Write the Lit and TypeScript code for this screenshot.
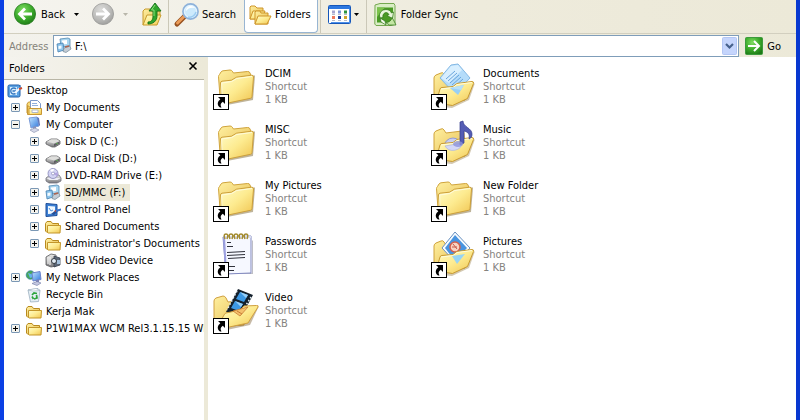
import { LitElement, html, svg, css, nothing } from "lit";
import { customElement, property } from "lit/decorators.js";

/* ---------- shared gradients: every icon carries the defs it needs ---------- */

const defs = svg`
  <defs>
    <linearGradient id="fold" x1="0" y1="0" x2="1" y2="1">
      <stop offset="0" stop-color="#fffcc8"/><stop offset=".5" stop-color="#fdeb90"/><stop offset="1" stop-color="#f0c450"/>
    </linearGradient>
    <linearGradient id="back" x1="0" y1="0" x2="1" y2="1">
      <stop offset="0" stop-color="#fff0a0"/><stop offset="1" stop-color="#e5bb50"/>
    </linearGradient>
    <radialGradient id="green" cx=".4" cy=".3" r=".75">
      <stop offset="0" stop-color="#7fdc62"/><stop offset=".55" stop-color="#3dac2c"/><stop offset="1" stop-color="#1d7a16"/>
    </radialGradient>
    <radialGradient id="gray" cx=".4" cy=".3" r=".75">
      <stop offset="0" stop-color="#dcdcda"/><stop offset=".6" stop-color="#bcbcba"/><stop offset="1" stop-color="#9c9c9a"/>
    </radialGradient>
    <linearGradient id="blue" x1="0" y1="0" x2="1" y2="1">
      <stop offset="0" stop-color="#c4e6ff"/><stop offset="1" stop-color="#2f78dc"/>
    </linearGradient>
    <linearGradient id="metal" x1="0" y1="0" x2="0" y2="1">
      <stop offset="0" stop-color="#eeeeec"/><stop offset="1" stop-color="#77777a"/>
    </linearGradient>
  </defs>`;

/* ---------- toolbar icons ---------- */

const round = (fill: string, rim: string, arrow: unknown) => svg`
  <circle cx="11" cy="11" r="10.6" fill=${fill} stroke=${rim} stroke-width=".8"/>${arrow}`;

const upIcon = svg`
  <path d="M1 23V9l2-2h5l1 2h9v4" fill="url(#back)" stroke="#c89a2c"/>
  <path d="M1 23l4-10h14l-4 10z" fill="url(#fold)" stroke="#c89a2c"/>
  <path d="M6 20c4 0 5-3 5-6V9H7l6-8 6 8h-4v5c0 5-4 8-9 8z" fill="#2fa52c" stroke="#14701a" stroke-width=".9"/>
  <path d="M13 3l-3.500 5h2.500v6" fill="none" stroke="#8ee07c"/>`;

const searchIcon = svg`
  <path d="M2 21l8-8" stroke="#96501e" stroke-width="5" stroke-linecap="round"/>
  <path d="M2.500 20l7-7" stroke="#ec9c58" stroke-width="3" stroke-linecap="round"/>
  <circle cx="15.500" cy="8.500" r="7.600" fill="#cdeafc" stroke="#8fb2da" stroke-width="1.600"/>
  <circle cx="15.500" cy="8.500" r="6" fill="none" stroke="#e8f6ff"/>
  <path d="M11 8c0-3 2-5 5-5 2 0 3 1 4 2-4-1-7 0-9 3z" fill="#fff"/>
  <path d="M13 14c3 1 7-1 8-5" stroke="#9ccdf2" stroke-width="1.500" fill="none"/>`;

const foldersIcon = svg`
  <path d="M1 14V2l1-1h4l2 2h6v11z" fill="url(#back)" stroke="#cf962a"/>
  <path d="M1 14L4 6h12l-3 8z" fill="url(#fold)" stroke="#cf962a"/>
  <path d="M6 19V7l1-1h4l1 2h7v11z" fill="url(#back)" stroke="#cf962a"/>
  <path d="M6 19l3-8h13l-4 8z" fill="url(#fold)" stroke="#cf962a"/>`;

const viewsIcon = svg`
  <rect x=".5" y=".5" width="22" height="18" rx="1" fill="#fff" stroke="#1557ba"/>
  <path d="M1 1h21v3H1z" fill="#2d78e0"/><path d="M21 4h1v14h-19v-1h18z" fill="#4d90ea"/>
  <path d="M4 5.500h3v3H4z" fill="#a7a5cf"/><path d="M10 5.500h3v3h-3z" fill="#7d94d8"/><path d="M16 5.500h3v3h-3z" fill="#2d9440"/>
  <path d="M4 11h3v3H4z" fill="#ee7a5c"/><path d="M10 11h3v3h-3z" fill="#1b3f9c"/><path d="M16 11h3v3h-3z" fill="#cfa42c"/>
  <path d="M4 9.500h3M10 9.500h3M16 9.500h3M4 15.500h3M10 15.500h3M16 15.500h3" stroke="#b4bccb"/>`;

const syncIcon = svg`
  <path d="M1 2l5-1.500h14l1 2v19l-4 1H2L.8 21z" fill="#d9edc4" stroke="#75a850"/>
  <path d="M3 4.500h16v15H3z" fill="#4a9a24"/>
  <path d="M3 4.500h8L3 14z" fill="#7cc24c"/>
  <path d="M6 15a6 6 0 0 1 6-8.500c3 0 4.500 1.500 5.500 3.500l2-1-1 6.500-5.500-3 2-1c-2.500-4-7-1-6 3z" fill="#e8f5da" stroke="#2d7414" stroke-width=".7"/>
  <path d="M18 14.500a6 6 0 0 1-6.500 5l4 2.500h6.500l-2-4z" fill="#c4e6a4" stroke="#2d7414" stroke-width=".7"/>
  <path d="M6 15l1 4 5 3-1-4z" fill="#f2faea" stroke="#2d7414" stroke-width=".7"/>`;

const goIcon = svg`
  <rect x=".5" y=".5" width="17" height="17" rx="1" fill="url(#green)" stroke="#3c9a3c"/>
  <path d="M3 9h10M9 4l5 5-5 5" fill="none" stroke="#fff" stroke-width="2"/>`;

const chevronIcon = svg`
  <rect x=".5" y=".5" width="14" height="17" rx="1" fill="#c5d5fc" stroke="#b3c6f4"/>
  <path d="M4 7l3.500 3.500L11 7" fill="none" stroke="#46618c" stroke-width="2.200"/>`;

/* ---------- small tree icons, 16 × 16 ---------- */

const tree: Record<string, unknown> = {
  desktop: svg`
    <rect x="1" y="2" width="12" height="12" rx="1.500" fill="#5aa2e4" stroke="#225ea8"/>
    <path d="M3 4h7v8H3z" fill="#d8efff"/>
    <path d="M9 6a3 3 0 1 0 0 4M5.500 8H9" fill="none" stroke="#3878c0" stroke-width="1.300"/>
    <path d="M8 10l6-6" stroke="#f4f8ff" stroke-width="2"/><path d="M12 6l3-1" stroke="#d0482c" stroke-width="2"/>
    <path d="M13 2v3" stroke="#225ea8"/>`,
  docs: svg`
    <path d="M1 13V4l1.500-2H5" fill="#f8dc7c" stroke="#c89834"/>
    <path d="M4.500.500h7l3 3v10h-10z" fill="#fff" stroke="#7c98c8"/>
    <path d="M6 3.500h5M6 5.500h6" stroke="#90b0dc"/>
    <path d="M1.500 5.500l3 2v7h-3z" fill="#f4cc5c" stroke="#c89834"/>
    <path d="M3 8.500h12.500v6H3z" fill="url(#fold)" stroke="#c89834"/>
    <path d="M6 10h6v2.500H6z" fill="#fff" stroke="#b0b8c8"/>`,
  computer: svg`
    <path d="M3 1l8-1 2 9-8 2z" fill="url(#blue)" stroke="#7c9cd8"/>
    <path d="M11 0l2 1 1 7-1 1z" fill="#5c74b8"/>
    <path d="M7 10l3-1v3H7z" fill="#8890b8"/>
    <path d="M4 13l5-2 4 2-5 2.500z" fill="#d4d8e8" stroke="#9098b4" stroke-width=".7"/>`,
  disk: svg`
    <path d="M1 8l5-3h6l3 2v3l-5 3H7L1 10z" fill="url(#metal)" stroke="#606062" stroke-width=".8"/>
    <path d="M2 7.500L6 5.500h6l2 1.500-5 2.500z" fill="#dededc"/>
    <path d="M9 10v2.500l5.500-3V7.500z" fill="#606064"/><circle cx="12" cy="9.500" r=".7" fill="#60c84c"/>`,
  dvd: svg`
    <path d="M1 10l4-3h9l2 3v3l-4 2H4l-3-2z" fill="url(#metal)" stroke="#70707c" stroke-width=".8"/>
    <path d="M1.500 10h14l-3 2h-8z" fill="#ececf4"/>
    <circle cx="8" cy="5.500" r="5" fill="#d4d4f4" stroke="#8484b8" stroke-width=".8"/>
    <path d="M8 5.500L5 1.800l4-1z" fill="#fff"/><path d="M8 5.500l4.500-1v4z" fill="#b4a4e0"/>
    <circle cx="8" cy="5.500" r="1.500" fill="#fff" stroke="#8484b8" stroke-width=".7"/>`,
  card: svg`
    <path d="M4 1l8-1 2 1v7l-9 1z" fill="#a9d6f0" stroke="#5088b0" stroke-width=".8"/>
    <path d="M6 2.500l5-.5v4l-5 .5z" fill="#fff"/>
    <path d="M1 6l6-1 1 7-6 2z" fill="#8cc4ec" stroke="#4880b0" stroke-width=".8"/>
    <path d="M2.500 8l3-.500v3l-3 .500z" fill="#f4fbff"/>
    <path d="M8 10l6-2 1 3-5 3.500-3-1z" fill="#c4ccd4" stroke="#708898" stroke-width=".7"/>
    <path d="M9 9l4-1" stroke="#b06450" stroke-width="1.600"/>`,
  panel: svg`
    <path d="M1 1.500l11 1v11l-11 1z" fill="#3c80d4" stroke="#1c4c98"/>
    <path d="M3 4l7 .5v7L3 12z" fill="#f0f8ff"/>
    <path d="M4 6l2 3 2-1" stroke="#4c90dc" fill="none"/>
    <path d="M6 12l5-4 2 1-4 4z" fill="#245098"/>
    <path d="M10 8l6-1.500v2l-5 1.500z" fill="#3c74c8"/><path d="M9 9l2-1v2z" fill="#c84830"/>`,
  folder: svg`
    <path d="M.5 12V4.500l1.500-2h4l1.500 2h6v9H2z" fill="url(#back)" stroke="#b98a1e"/>
    <path d="M2.500 13.500v-7h13l-.5 7.500H3z" fill="url(#fold)" stroke="#c3962a"/>`,
  usb: svg`
    <path d="M1 4l5-3 5 1v11l-5 1-5-2z" fill="url(#metal)" stroke="#58585c" stroke-width=".8"/>
    <path d="M9 3l6 2v7l-6 2z" fill="#5c6878" stroke="#38404c" stroke-width=".8"/>
    <path d="M3 4v7M5 4v8" stroke="#fff"/><circle cx="9" cy="8" r="2.500" fill="#e4ecf4" stroke="#303840"/>
    <path d="M12 7h3v4h-3z" fill="#a4c0dc"/>`,
  network: svg`
    <circle cx="4.500" cy="5" r="4.300" fill="#4aa858" stroke="#2c7ca0" stroke-width=".7"/>
    <path d="M2 3c2 0 3 2 5 1v3L4 8z" fill="#64b4ec"/>
    <path d="M6 3l8-1.500 1 8-8 1.500z" fill="url(#blue)" stroke="#6c84cc"/>
    <path d="M6 13.500l5-2 4 1.500-4 2.500z" fill="#c4c8e0" stroke="#8088b0" stroke-width=".7"/>
    <path d="M10 10l3-.5v2.500h-3z" fill="#7c84b4"/>`,
  bin: svg`
    <path d="M2 3l10-1.500 2 2-1.500 11-8 .5z" fill="#e4eef4" stroke="#9cb0c0" stroke-width=".8"/>
    <path d="M2 3l5 1 7-.5-4-2z" fill="#fff" stroke="#9cb0c0" stroke-width=".6"/>
    <path d="M6 8l2-2 3 .5M10.500 8l.5 3-3 1M7.500 12L6 9.500" fill="none" stroke="#2ca43c" stroke-width="1.700"/>`,
};

/* ---------- large file icons, 44 × 46 ---------- */

const backLeaf = svg`
  <path d="M3 36V13q0-2 2-3l5-2q2-1 3 1l2 3 16-2q2 0 2 2l1 23z" fill="url(#back)" stroke="#cfa23a"/>`;
const frontLeaf = svg`
  <path d="M11 42l10 1 17-8 6-17z" fill="#806020" opacity=".35"/>
  <path d="M5 38l4-14q.5-1.500 2-1.500l11-1 4-3 15-2q2 0 1.500 2l-6 15-15 7z" fill="url(#fold)" stroke="#c89a30"/>
  <path d="M10 24l12-1.500 4-3 15-2" fill="none" stroke="#fffcdc"/>`;

const big: Record<string, unknown> = {
  folder: svg`
    <path d="M14 40l26-5 2-24-1-1z" fill="#705820" opacity=".45"/>
    <path d="M7 32L5.500 11.500q0-1 1-2L8 7q.8-1 2-1.200L17 5q1.500 0 2.300 1.200L20.500 8l14-1.500q2-.2 2.500 1.500l1.500 4-3 21z" fill="url(#back)" stroke="#d0a43c"/>
    <path d="M9 35L7.500 18q0-1.500 1.500-1.800l9.500-1 5-3 15-2q2-.2 2 1.800l-1.500 19.500q0 1.500-1.500 1.800L15 38q-4 .5-6-3z" fill="url(#fold)" stroke="#cda03a"/>
    <path d="M9 34L8.700 18l10-1.500 5-3 15.300-2" fill="none" stroke="#fffcdc"/>`,
  documents: svg`${backLeaf}
    <path d="M20 0l7-1 12 14-15 16L9 13z" fill="#b4dcfa" stroke="#84b8e4"/>
    <path d="M20 1l7-1 4 5-13 13-8-5z" fill="#d8efff"/>
    <path d="M15 14l9-8M17 16l9-8M19 18l9-8M21 20l9-8M23 22l9-8" stroke="#68a4dc"/>
    ${frontLeaf}<path d="M19 23l14-3-6 10z" fill="#98d0f4"/><path d="M19 23l14-3-3 5z" fill="#b8e0f8"/>`,
  music: svg`${backLeaf}
    <circle cx="22" cy="26" r="9" fill="#c8cef4" stroke="#9098d4"/>
    ${frontLeaf}
    <path d="M14 25a9 8 0 0 0 17-3l-6 1-5 1z" fill="#d4d8f8" stroke="#a4acdc" stroke-width=".6"/>
    <path d="M29 1l3-1c0 6 9 7 9 13 0 3-1 4-3 5 1-5-1-7-5-8v12l-4 2z" fill="#545cb4" stroke="#343c8c" stroke-width=".7"/>
    <ellipse cx="27" cy="23" rx="5" ry="3" fill="#8c94dc" opacity=".8"/>`,
  pictures: svg`${backLeaf}
    <path d="M24-1l15 16-14 15L11 15z" fill="#f8fcff" stroke="#6890c0"/>
    <path d="M24 2l12 13-12 13-10-13z" fill="#4894e0"/>
    <circle cx="24" cy="14" r="5" fill="#f8d4c4" stroke="#d4604c" stroke-width="1.500"/>
    <path d="M22 11l4 5M21 14h5" stroke="#c85848"/>
    ${frontLeaf}<path d="M21 23l13-2-8 10z" fill="#98d4f4"/>`,
  notepad: svg`
    <path d="M14 40h25V7l1 1v33H16z" fill="#606070" opacity=".4"/>
    <path d="M10 4l28-1v37l-25 1z" fill="#f6f8ff" stroke="#8088c0"/>
    <path d="M10 4l2 37 2-1-2-36z" fill="#9ca0e0"/>
    <path d="M12 5h26V3H12z" fill="#d8dcf0"/>
    <path d="M12 6q-2-5 1-5t1 5M17 6q-2-5 1-5t1 5M22 6q-2-5 1-5t1 5M27 6q-2-5 1-5t1 5M32 6q-2-5 1-5t1 5" fill="none" stroke="#a48c30" stroke-width="1.500"/>
    <path d="M14 9.500h4M14 13.500h6M14 19.500l18-1M14 22.500l18-1M15 25.500l17-1M16 33.500h6M16 37.500h5" stroke="#30323c"/>`,
  video: svg`
    <path d="M1 38V12q0-2 2-3l7-2q2 0 3 2l2 4 16-2v25z" fill="url(#back)" stroke="#d0a040"/>
    <path d="M25 0l15 6-12 22-15-5z" fill="#14202c"/>
    <path d="M27 3l8 3-4 7-8-3zM22 12l8 3-4 7-8-3z" fill="#3c98e4"/>
    <path d="M27 3l8 3-2 3zM22 12l8 3-2 3z" fill="#98d0f8"/>
    <path d="M24 2L14 21M38 8L27 26" stroke="#e4ecf0" stroke-width="1.500" stroke-dasharray="1.500 2"/>
    <path d="M9 42l28-6 9-19z" fill="#705020" opacity=".4"/>
    <path d="M7 40l28-6 10-16q.5-2-1.500-1.500L31 17l-4 4-14 3q-1 0-2 2L5 37z" fill="url(#fold)" stroke="#d0a040"/>
    <path d="M20 22l15-4-8 9z" fill="#f4c06c" stroke="#c87c34" stroke-width=".8"/><path d="M24 22l5 3" stroke="#c87c34"/>`,
};

const shortcut = svg`
  <rect x=".5" y="29.500" width="15" height="15" fill="#fff" stroke="#000"/>
  <path d="M5 32h7v7l-2.200-2.200C7.500 38.500 7 40 8.500 42.500H7C3.500 40 4.500 36.500 7.300 34.300z" fill="#000"/>`;

/* ---------- data ---------- */

interface Node { label: string; icon: string; depth: number; toggle?: "+" | "-"; selected?: boolean; }
const nodes: Node[] = [
  { label: "Desktop", icon: "desktop", depth: 0 },
  { label: "My Documents", icon: "docs", depth: 1, toggle: "+" },
  { label: "My Computer", icon: "computer", depth: 1, toggle: "-" },
  { label: "Disk D (C:)", icon: "disk", depth: 2, toggle: "+" },
  { label: "Local Disk (D:)", icon: "disk", depth: 2, toggle: "+" },
  { label: "DVD-RAM Drive (E:)", icon: "dvd", depth: 2, toggle: "+" },
  { label: "SD/MMC (F:)", icon: "card", depth: 2, toggle: "+", selected: true },
  { label: "Control Panel", icon: "panel", depth: 2, toggle: "+" },
  { label: "Shared Documents", icon: "folder", depth: 2, toggle: "+" },
  { label: "Administrator's Documents", icon: "folder", depth: 2, toggle: "+" },
  { label: "USB Video Device", icon: "usb", depth: 2 },
  { label: "My Network Places", icon: "network", depth: 1, toggle: "+" },
  { label: "Recycle Bin", icon: "bin", depth: 1 },
  { label: "Kerja Mak", icon: "folder", depth: 1 },
  { label: "P1W1MAX WCM Rel3.1.15.15 WI", icon: "folder", depth: 1, toggle: "+" },
];

const files: [string, string][] = [
  ["DCIM", "folder"], ["Documents", "documents"],
  ["MISC", "folder"], ["Music", "music"],
  ["My Pictures", "folder"], ["New Folder", "folder"],
  ["Passwords", "notepad"], ["Pictures", "pictures"],
  ["Video", "video"],
];

const icon = (w: number, h: number, body: unknown) => html`
  <svg width=${w} height=${h} viewBox="0 0 ${w} ${h}" aria-hidden="true">${defs}${body}</svg>`;
const caret = (fill: string) => icon(5, 3, svg`<path d="M0 0h5L2.500 3z" fill=${fill}/>`);

const base = css`
  * { box-sizing: border-box; }
  svg { display: block; flex: none; overflow: visible; }
  button, a, input { font: inherit; color: inherit; text-decoration: none; }
  button { display: flex; align-items: center; margin: 0; padding: 0; border: 0; background: none; white-space: nowrap; }
`;

@customElement("tool-bar")
class ToolBar extends LitElement {
  static styles = [base, css`
    :host { display: flex; height: 34px; padding-left: 10px; background: linear-gradient(90deg, #f5f4ef, #eeebdc 60%, #ece9d8);
      border-bottom: 1px solid #d2cfbf; }
    button { height: 28px; }
    .group { display: flex; flex: none; }
    .back { gap: 5px; }
    .more { width: 10px; margin-left: 6px; justify-content: center; }
    .forward { margin-left: 11px; }
    .up { margin-left: 12px; }
    .sep { width: 1px; background: #cbc8b8; }
    .up + .sep { margin-left: 6px; }
    .search { gap: 3px; margin: 0 8px 0 6px; }
    .folders { height: 33px; padding: 0 6px 3px 4px; gap: 4px; background: #fff;
      border: 1px solid #98b5d2; border-top: 0; border-radius: 0 0 4px 4px; }
    .folders + .sep { margin-left: 2px; }
    .views { margin-left: 7px; gap: 3px; }
    .views + .sep { margin-left: 7px; }
    .sync { margin-left: 7px; gap: 5px; }
  `];
  render() {
    return html`
      <div class="group">
        <button class="back">${icon(22, 22, round("url(#green)", "#2a7c22", svg`<path d="M18 11H6M11 5.500L5.500 11l5.500 5.500" fill="none" stroke="#fff" stroke-width="2.800"/>`))}Back</button>
        <button class="more" aria-label="Back history">${caret("#000")}</button>
        <button class="forward" aria-label="Forward">${icon(22, 22, round("url(#gray)", "#9a9a98", svg`<path d="M4 11h12M11 5.500l5.500 5.500-5.500 5.500" fill="none" stroke="#fff" stroke-width="2.800"/>`))}</button>
        <button class="more" aria-label="Forward history">${caret("#b8b6aa")}</button>
        <button class="up" aria-label="Up">${icon(20, 24, upIcon)}</button>
        <div class="sep"></div>
        <button class="search">${icon(24, 23, searchIcon)}Search</button>
      </div>
      <div class="group">
        <button class="folders" aria-pressed="true">${icon(22, 20, foldersIcon)}Folders</button>
        <div class="sep"></div>
        <button class="views" aria-label="Views">${icon(23, 19, viewsIcon)}${caret("#000")}</button>
        <div class="sep"></div>
        <button class="sync">${icon(22, 23, syncIcon)}Folder Sync</button>
      </div>`;
  }
}

@customElement("address-bar")
class AddressBar extends LitElement {
  static styles = [base, css`
    :host { display: flex; align-items: center; height: 23px; padding: 1px 15px 0 5px;
      background: linear-gradient(90deg, #f3f2ec, #ece9d8); }
    label { width: 44px; flex: none; color: #85837a; }
    .combo { flex: 1; display: flex; align-items: center; height: 22px; padding: 0 1px 0 2px; background: #fff; border: 1px solid #7f9db9; }
    input { flex: 1; min-width: 0; height: 18px; margin: 0; padding: 0 0 0 3px; border: 0; outline: 0; background: none; color: #000; }
    .go { gap: 4px; margin-left: 6px; }
  `];
  render() {
    return html`
      <label for="path">Address</label>
      <div class="combo">${icon(16, 16, tree.card)}
        <input id="path" .value=${"F:\\"}>
        <button aria-label="Show addresses">${icon(15, 18, chevronIcon)}</button>
      </div>
      <button class="go">${icon(18, 18, goIcon)}Go</button>`;
  }
}

@customElement("folder-tree")
class FolderTree extends LitElement {
  static styles = [base, css`
    :host { display: flex; flex-direction: column; overflow: hidden; background: #fff; }
    header { display: flex; align-items: center; justify-content: space-between; height: 23px; padding: 1px 7px 0 5px;
      background: linear-gradient(90deg, #f4f3ee, #ece9d8); border-bottom: 1px solid #b9b6a6; }
    header button { padding-bottom: 6px; }
    h2 { margin: 0; font: inherit; }
    ul { margin: 0; padding: 2px 0 0; list-style: none; }
    li { display: flex; align-items: center; height: 17px; padding-left: 3px; white-space: nowrap; }
    .d1 { padding-left: 7px; }
    .d2 { padding-left: 26px; }
    .box { width: 9px; height: 9px; flex: none; margin-right: 6px; }
    a { margin-left: 3px; padding: 0 1px; line-height: 17px; }
    .selected { padding-right: 5px; background: #ece9d8; }
  `];
  render() {
    return html`
      <header><h2>Folders</h2>
        <button aria-label="Close">${icon(8, 8, svg`<path d="M.500.500l7 7M7.500.500l-7 7" stroke="#000" stroke-width="1.600"/>`)}</button>
      </header>
      <ul>${nodes.map(n => html`
        <li class="d${n.depth}">
          ${n.depth === 0 ? nothing : n.toggle
            ? html`<button class="box" aria-label="Toggle ${n.label}">${icon(9, 9, svg`
                <rect x=".5" y=".5" width="8" height="8" rx=".5" fill="#f4f3ee" stroke="#7b98b5"/>
                <path d=${n.toggle === "+" ? "M2 4.500h5M4.500 2v5" : "M2 4.500h5"} stroke="#000"/>`)}</button>`
            : html`<span class="box"></span>`}
          ${icon(16, 16, tree[n.icon])}
          <a href="#" class=${n.selected ? "selected" : ""}>${n.label}</a>
        </li>`)}
      </ul>`;
  }
}

@customElement("file-tile")
class FileTile extends LitElement {
  @property() name = "";
  @property() kind = "folder";
  static styles = [base, css`
    a { display: flex; gap: 8px; height: 46px; }
    .text { display: flex; flex-direction: column; padding-top: 2px; line-height: 13px; color: #85837f; }
    .name { color: #000; }
  `];
  render() {
    return html`<a href="#">${icon(44, 46, svg`${big[this.kind]}${shortcut}`)}
      <span class="text"><span class="name">${this.name}</span><span>Shortcut</span><span>1 KB</span></span></a>`;
  }
}

@customElement("app-root")
class AppRoot extends LitElement {
  static styles = [base, css`
    :host { box-sizing: border-box; display: flex; flex-direction: column; min-height: 100vh; border: solid #0a3fe0; border-width: 0 4px;
      border-left-color: #0b40e4; border-right-color: #0838d0; background: #ece9d8; color: #000;
      font: 11px "DejaVu Sans Condensed", "DejaVu Sans", sans-serif; overflow: hidden; }
    .main { flex: 1; display: grid; grid-template-columns: 200px 1fr; gap: 4px; }
    .files { display: grid; grid-template-columns: repeat(auto-fill, 218px); grid-auto-rows: 46px; gap: 10px 0;
      align-content: start; padding: 8px 5px; background: #fff; }
  `];
  render() {
    return html`
      <tool-bar></tool-bar>
      <address-bar></address-bar>
      <div class="main">
        <folder-tree></folder-tree>
        <div class="files">${files.map(([n, k]) => html`<file-tile name=${n} kind=${k}></file-tile>`)}</div>
      </div>`;
  }
}
